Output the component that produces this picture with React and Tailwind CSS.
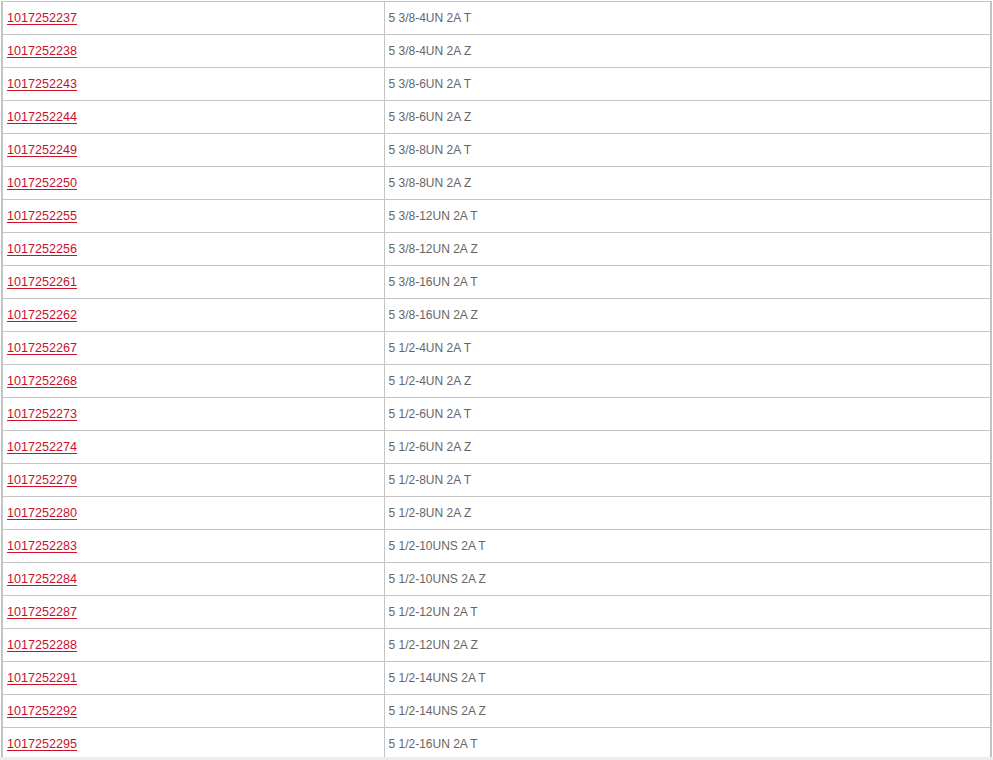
const rows = [
  ["1017252237", "5 3/8-4UN 2A T"],
  ["1017252238", "5 3/8-4UN 2A Z"],
  ["1017252243", "5 3/8-6UN 2A T"],
  ["1017252244", "5 3/8-6UN 2A Z"],
  ["1017252249", "5 3/8-8UN 2A T"],
  ["1017252250", "5 3/8-8UN 2A Z"],
  ["1017252255", "5 3/8-12UN 2A T"],
  ["1017252256", "5 3/8-12UN 2A Z"],
  ["1017252261", "5 3/8-16UN 2A T"],
  ["1017252262", "5 3/8-16UN 2A Z"],
  ["1017252267", "5 1/2-4UN 2A T"],
  ["1017252268", "5 1/2-4UN 2A Z"],
  ["1017252273", "5 1/2-6UN 2A T"],
  ["1017252274", "5 1/2-6UN 2A Z"],
  ["1017252279", "5 1/2-8UN 2A T"],
  ["1017252280", "5 1/2-8UN 2A Z"],
  ["1017252283", "5 1/2-10UNS 2A T"],
  ["1017252284", "5 1/2-10UNS 2A Z"],
  ["1017252287", "5 1/2-12UN 2A T"],
  ["1017252288", "5 1/2-12UN 2A Z"],
  ["1017252291", "5 1/2-14UNS 2A T"],
  ["1017252292", "5 1/2-14UNS 2A Z"],
  ["1017252295", "5 1/2-16UN 2A T"],
];

export default function App() {
  return (
    <div className="w-[993px] h-[760px] overflow-hidden bg-white flex flex-col" style={{ fontFamily: '"Liberation Sans", Arial, sans-serif' }}>
      <div className="flex-1 overflow-hidden pt-[1px] pl-[1px]">
        <table className="w-[991px] border-collapse border-l-2 border-r-2 border-[#c4c4c4] text-[12px]">
          <tbody>
            {rows.map(([a, b]) => (
              <tr key={a} className="h-[33px]">
                <td className="w-[382px] border border-[#c4c4c4] pl-[4px] py-0 align-middle">
                  <a href="#" className="text-[12.6px] text-[#c8102e] underline decoration-[#d0112b] underline-offset-[2px]">{a}</a>
                </td>
                <td className="border border-[#c4c4c4] pl-[4px] py-0 align-middle text-[#666666]">{b}</td>
              </tr>
            ))}
          </tbody>
        </table>
      </div>
      <div className="h-[3px] bg-[#ececec]" />
    </div>
  );
}
